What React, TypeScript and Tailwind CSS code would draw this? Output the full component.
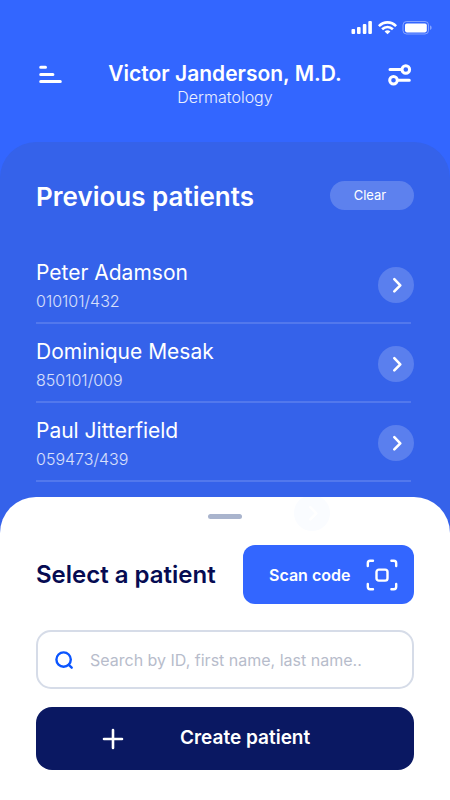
const patients = [
  { name: "Peter Adamson", id: "010101/432" },
  { name: "Dominique Mesak", id: "850101/009" },
  { name: "Paul Jitterfield", id: "059473/439" },
];

function StatusBar() {
  return (
    <div className="flex h-9 items-end justify-end pr-4">
      <svg width="84" height="16" viewBox="0 0 84 16" fill="none" aria-hidden="true">
        <g fill="#fff">
          <rect x="1.5" y="9" width="3.6" height="5" rx="1" />
          <rect x="7" y="7" width="3.6" height="7" rx="1" />
          <rect x="12.8" y="4" width="3.6" height="10" rx="1" />
          <rect x="18.3" y="1" width="3.6" height="13" rx="1" />
        </g>
        <g stroke="#fff" strokeWidth="2.6">
          <path d="M28.9 6.1c5-5 12.2-5 17.2 0" />
          <path d="M32.1 9.3c3.2-3 7.6-3 10.8 0" />
        </g>
        <path d="M34.6 11.4c1.8-1.5 4-1.5 5.8 0L37.5 14.2Z" fill="#fff" />
        <rect x="53" y="1.5" width="25.5" height="12.5" rx="3.5" stroke="#fff" strokeOpacity=".4" />
        <rect x="55" y="3.4" width="21.8" height="9" rx="1.8" fill="#fff" />
        <path d="M80 5.6c2.2.6 2.2 3.8 0 4.4Z" fill="#fff" fillOpacity=".4" />
      </svg>
    </div>
  );
}

function Header() {
  return (
    <header className="flex h-[106px] items-start justify-between px-9 pt-[25px]">
      <button type="button" aria-label="Menu" className="flex h-7 w-7 items-center justify-center">
        <svg width="28" height="28" viewBox="0 0 28 28" stroke="#fff" strokeWidth="3" strokeLinecap="round" aria-hidden="true">
          <path d="M4.7 6.2h4.8M4.7 13.4h12.2M4.7 20.4h19.6" />
        </svg>
      </button>
      <div className="text-center">
        <h1 className="text-[21px] leading-[26px] font-semibold">Victor Janderson, M.D.</h1>
        <p className="text-base leading-5 font-light text-white/90">Dermatology</p>
      </div>
      <button type="button" aria-label="Filters" className="flex h-7 w-7 items-center justify-center">
        <svg width="28" height="28" viewBox="0 0 28 28" fill="none" stroke="#fff" strokeWidth="3" strokeLinecap="round" aria-hidden="true">
          <path d="M4 8.5h11.5M12 19.2h11.3" />
          <circle cx="19.8" cy="8.5" r="3.8" />
          <circle cx="7.5" cy="19.2" r="3.8" />
        </svg>
      </button>
    </header>
  );
}

function Chevron() {
  return (
    <svg width="36" height="36" viewBox="0 0 36 36" fill="none" stroke="#fff" strokeWidth="2.6" strokeLinecap="round" strokeLinejoin="round" aria-hidden="true">
      <path d="m16.3 12.2 6 6.1-6 6.1" />
    </svg>
  );
}

function PreviousPatients() {
  return (
    <section className="rounded-t-[36px] bg-[#3562ea] pt-[39px] pb-[60px]">
      <div className="flex items-start justify-between px-9">
        <h2 className="text-[26px] leading-8 font-semibold">Previous patients</h2>
        <button type="button" className="h-[29px] w-[84px] rounded-full bg-[#5d81ee] pr-1 text-[13px]">
          Clear
        </button>
      </div>
      <ul className="pt-8 pr-[39px] pl-9">
        {patients.map((patient) => (
          <li key={patient.id} className="flex h-[79px] items-center justify-between border-b-2 border-[#5278ed]">
            <div className="pt-1.5">
              <p className="text-[21px] leading-7">{patient.name}</p>
              <p className="text-base leading-7 font-light text-white/80">{patient.id}</p>
            </div>
            <button
              type="button"
              aria-label={`Open ${patient.name}`}
              className="mt-0.5 -mr-[3px] flex h-9 w-9 items-center justify-center rounded-full bg-[#5a7fee]"
            >
              <Chevron />
            </button>
          </li>
        ))}
      </ul>
    </section>
  );
}

function SelectPatient() {
  return (
    <section className="relative -mt-[45px] overflow-hidden rounded-t-[36px] bg-white px-9 pt-[17px] pb-[31px] text-[#060b52]">
      <div className="mx-auto h-[5px] w-[34px] rounded-full bg-[#a9b4cd]" />
      <div aria-hidden="true" className="absolute -top-0.5 right-[120px] h-9 w-9 rounded-full bg-[#fafcff]">
        <Chevron />
      </div>
      <div className="flex items-center justify-between pt-[26px]">
        <h2 className="text-2xl leading-8 font-semibold whitespace-nowrap">Select a patient</h2>
        <button
          type="button"
          className="flex h-[59px] w-[171px] items-center justify-between rounded-xl bg-[#3366ff] pr-4 pl-[26px] text-base font-semibold text-white"
        >
          Scan code
          <svg width="32" height="32" viewBox="0 0 32 32" fill="none" stroke="#fff" strokeWidth="2.4" strokeLinecap="round" strokeLinejoin="round" aria-hidden="true">
            <path d="M1.8 7V4.2q0-2.4 2.4-2.4H7M25.4 1.8h2.4q2.4 0 2.4 2.4V7M30.2 25v2.8q0 2.4-2.4 2.4h-2.4M7 30.2H4.2q-2.4 0-2.4-2.4V25" />
            <rect x="10.5" y="10.6" width="11" height="11" rx="2.4" />
          </svg>
        </button>
      </div>
      <label className="mt-[26px] flex h-[59px] items-center rounded-[15px] border-2 border-[#d6dce8] pl-4">
        <svg width="24" height="24" viewBox="0 0 24 24" fill="none" stroke="#0b55ff" strokeWidth="2.4" strokeLinecap="round" aria-label="Search">
          <circle cx="9.6" cy="11.6" r="7.2" />
          <path d="m14.8 16.9 2.9 2.8" />
        </svg>
        <input
          type="search"
          placeholder="Search by ID, first name, last name.."
          className="ml-3 min-w-0 flex-1 text-base outline-none placeholder:text-[#b7bccb]"
        />
      </label>
      <button
        type="button"
        className="mt-[18px] flex h-[63px] w-full items-center rounded-2xl bg-[#0a1862] pl-[65px] text-[19px] font-semibold text-white"
      >
        <svg width="24" height="24" viewBox="0 0 24 24" stroke="#fff" strokeWidth="2.6" strokeLinecap="round" aria-hidden="true">
          <path d="M3 12h18M12 3v18" />
        </svg>
        <span className="pl-[55px]">Create patient</span>
      </button>
    </section>
  );
}

export default function App() {
  return (
    <main className="min-h-screen bg-[#3366ff] font-['Inter',sans-serif] text-white">
      <StatusBar />
      <Header />
      <PreviousPatients />
      <SelectPatient />
    </main>
  );
}
